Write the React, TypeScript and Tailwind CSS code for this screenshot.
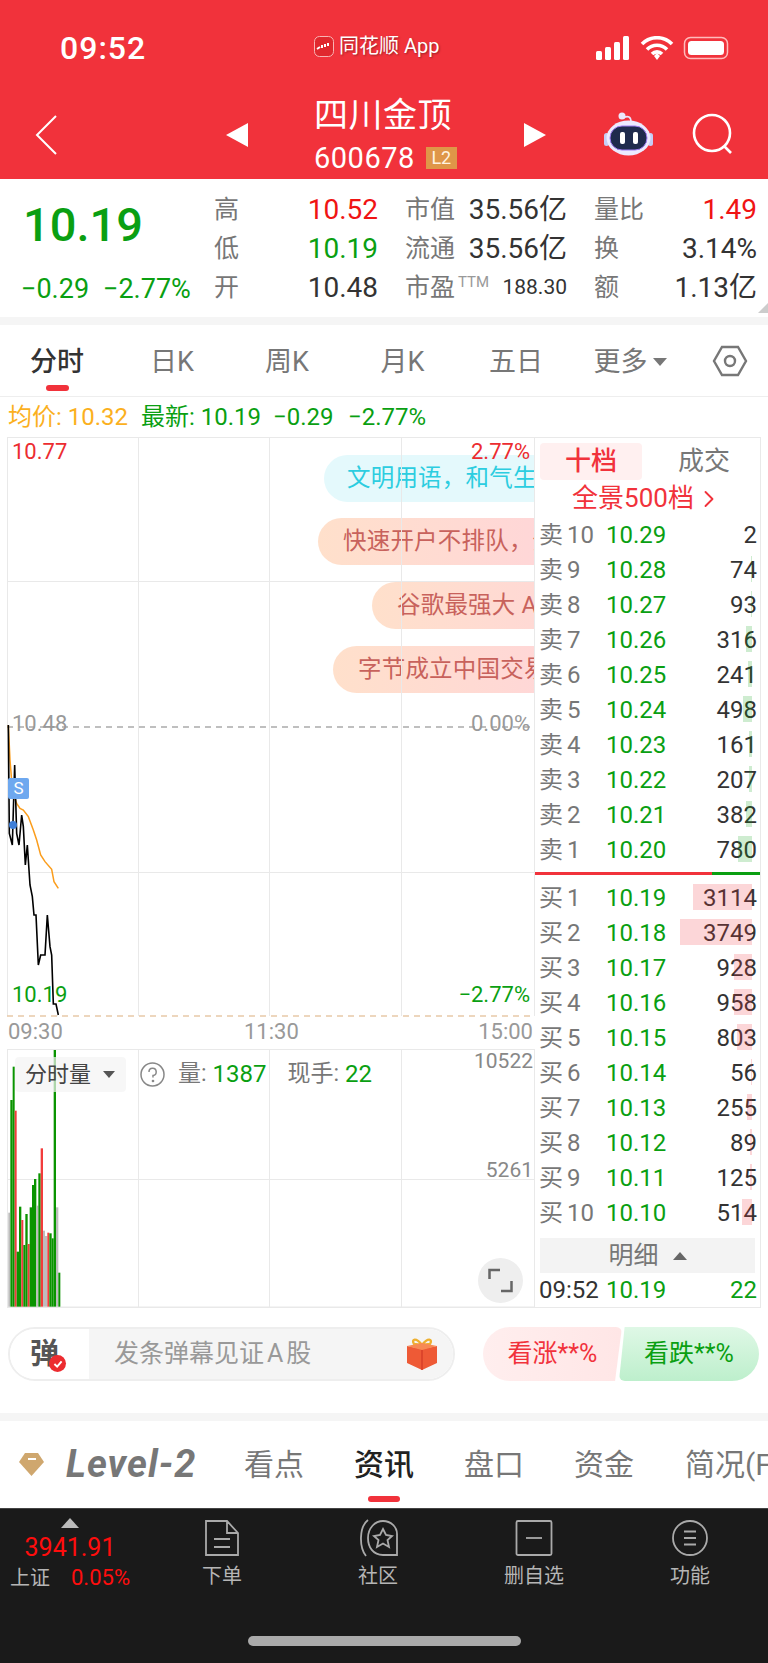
import React from "react";
import { ChevronRight } from "lucide-react";

const GREEN = "text-[#0a9f12]";

const blackLine = [[25,75],[28,400],[37,435],[44,195],[50,400],[57,435],[65,345],[70,380],[76,495],[82,435],[90,555],[97,590],[102,645],[108,645],[115,795],[122,765],[135,765],[142,645],[150,740],[155,765],[160,912],[168,912],[175,945]];
const avgLine = [[25,75],[30,180],[38,280],[50,310],[60,325],[70,330],[85,350],[100,390],[110,420],[122,465],[135,485],[155,508],[162,545],[175,565]];
const toPts = (l: number[][]) => l.map(([x, y]) => `${x / 3},${y / 3 + 700}`).join(" ");

// x0, x1, top in 3x crop coords, c = colour
const volBars: [number, number, number, string][] = [
  [25,30,548,"#bdbdbd"],[31,38,210,"#0a9400"],[38,44,110,"#0a9400"],[44,50,242,"#f23c3c"],[50,57,665,"#0a9400"],[57,64,530,"#0a9400"],
  [64,70,570,"#f23c3c"],[70,76,645,"#0a9400"],[76,83,552,"#0a9400"],[83,89,642,"#f23c3c"],[89,96,532,"#0a9400"],[96,102,465,"#0a9400"],
  [102,109,447,"#0a9400"],[109,115,527,"#bdbdbd"],[115,122,430,"#0a9400"],[122,129,355,"#f23c3c"],[129,135,602,"#bdbdbd"],[135,142,618,"#bdbdbd"],
  [142,148,608,"#f23c3c"],[148,155,610,"#0a9400"],[155,161,625,"#0a9400"],[161,168,60,"#0a9400"],[168,175,532,"#bdbdbd"],[175,181,728,"#0a9400"],
];

const sells = [
  ["卖", "10", "10.29", "2", 0], ["卖", "9", "10.28", "74", 1], ["卖", "8", "10.27", "93", 1], ["卖", "7", "10.26", "316", 6], ["卖", "6", "10.25", "241", 4],
  ["卖", "5", "10.24", "498", 9], ["卖", "4", "10.23", "161", 3], ["卖", "3", "10.22", "207", 3], ["卖", "2", "10.21", "382", 6], ["卖", "1", "10.20", "780", 14],
] as const;
const buys = [
  ["买", "1", "10.19", "3114", 59], ["买", "2", "10.18", "3749", 72], ["买", "3", "10.17", "928", 18], ["买", "4", "10.16", "958", 18], ["买", "5", "10.15", "803", 15],
  ["买", "6", "10.14", "56", 1], ["买", "7", "10.13", "255", 5], ["买", "8", "10.12", "89", 2], ["买", "9", "10.11", "125", 2], ["买", "10", "10.10", "514", 10],
] as const;

function BookRow({ row, bar }: { row: readonly [string, string, string, string, number]; bar: string }) {
  return (
    <div className="relative flex items-center h-[35px] pl-[4px] pr-[3px] text-[24px]">
      <span className="w-[67px] text-[#777] whitespace-nowrap">{row[0]}<span className="ml-[4px]">{row[1]}</span></span>
      <span className={`${GREEN} w-[70px]`}>{row[2]}</span>
      <span className="relative flex-1 text-right text-[#333]">{row[3]}</span>
      <span className={`absolute right-[8px] top-[4px] h-[26px] ${bar}`} style={{ width: row[4] }} />
    </div>
  );
}

function Stat({ label, value, color = "text-[#333]" }: { label: string; value: string; color?: string }) {
  return (
    <div className="flex items-center justify-between h-[39px]">
      <span className="text-[25px] text-[#777]">{label}</span>
      <span className={`text-[28px] ${color}`}>{value}</span>
    </div>
  );
}

function Pill({ text, top, left, tone }: { text: string; top: string; left: string; tone: string }) {
  return (
    <div className={`absolute ${top} ${left} h-[47px] w-[300px] rounded-full flex items-center text-[23.5px] tracking-[0.2px] whitespace-nowrap ${tone}`}>
      {text}
    </div>
  );
}

function TabLabel({ children, active }: { children: React.ReactNode; active?: boolean }) {
  return (
    <div className={`relative w-[110px] shrink-0 text-center text-[30px] ${active ? "text-[#222] font-medium" : "text-[#777]"}`}>
      {children}
      {active && <span className="absolute left-[39px] top-[54px] w-[32px] h-[6px] rounded-full bg-[#f1323b]" />}
    </div>
  );
}

function NavItem({ label, children }: { label: string; children: React.ReactNode }) {
  return (
    <div className="w-[156px] shrink-0 flex flex-col items-center pt-[10px]">
      {children}
      <span className="mt-[4px]">{label}</span>
    </div>
  );
}

export default function App() {
  return (
    <div className="w-[768px] h-[1663px] overflow-hidden bg-white font-['Roboto','Noto_Sans_CJK_SC',sans-serif]">
      {/* Red header */}
      <div className="relative h-[179px] bg-[#f1323b] text-white">
        <div className="flex items-center h-[96px] pl-[60px] pr-[36px]">
          <span className="w-[254px] text-[32px] font-medium tracking-[1px]">09:52</span>
          <div className="flex items-center gap-[5px] -mt-[4px] w-[282px] [text-shadow:1px_1px_2px_rgba(0,0,0,0.35)]">
            <svg width="20" height="21" viewBox="0 0 20 21">
              <rect x="0.5" y="0.5" width="19" height="20" rx="5" fill="#e0282e" stroke="#f8b4b4" />
              <path d="M3 13 L6 11 M8 9 L8 12 M11 8 L11 11 M14 7 L14 10" stroke="#fff" strokeWidth="2" />
            </svg>
            <span className="text-[20px]">同花顺 App</span>
          </div>
          <svg width="134" height="24" viewBox="0 0 134 24" className="shrink-0">
            <rect x="0" y="15" width="6" height="9" rx="1.5" fill="#fff" />
            <rect x="9" y="11" width="6" height="13" rx="1.5" fill="#fff" />
            <rect x="18" y="6" width="6" height="18" rx="1.5" fill="#fff" />
            <rect x="27" y="0" width="6" height="24" rx="1.5" fill="#fff" />
            <path d="M46 8 A 21 21 0 0 1 76 8 M51 13.5 A 14 14 0 0 1 71 13.5 M56 18 A 7 7 0 0 1 66 18" fill="none" stroke="#fff" strokeWidth="3.6" />
            <path d="M58 20 L61 17 L64 20 L61 24 Z" fill="#fff" />
            <rect x="88.5" y="1.5" width="43" height="21" rx="6" fill="none" stroke="#fbb" strokeWidth="1.5" />
            <rect x="92" y="5" width="36" height="14" rx="3.5" fill="#fff" />
          </svg>
        </div>
        <svg className="absolute left-[34px] top-[114px]" width="24" height="42" viewBox="0 0 24 42" fill="none" stroke="#fff" strokeWidth="2">
          <path d="M22 2 L3 21 L22 40" />
        </svg>
        <svg className="absolute left-[225px] top-[122px]" width="24" height="26" viewBox="0 0 24 26"><path d="M1 13 L23 1 V25 Z" fill="#fff" /></svg>
        <div className="absolute left-[314px] top-[93px] text-[34px] leading-[45px] tracking-[0.5px]">四川金顶</div>
        <div className="absolute left-[314px] top-[140px] flex items-center">
          <span className="text-[29px] leading-[36px] tracking-[0.5px]">600678</span>
          <span className="ml-[11px] w-[31px] h-[22px] bg-[#df9648] text-[#fff3e0] text-[18px] leading-[22px] text-center">L2</span>
        </div>
        <svg className="absolute left-[523px] top-[122px]" width="24" height="26" viewBox="0 0 24 26"><path d="M23 13 L1 1 V25 Z" fill="#fff" /></svg>
        <svg className="absolute left-[604px] top-[112px]" width="50" height="44" viewBox="0 0 50 44">
          <path d="M19 6 Q27 2 27 10" stroke="#e9e4fb" strokeWidth="1.6" fill="none" />
          <circle cx="18" cy="4" r="3.5" fill="#ece8fb" />
          <rect x="0" y="21" width="5" height="13" rx="2.5" fill="#c6cdf6" />
          <rect x="44" y="21" width="5" height="13" rx="2.5" fill="#c6cdf6" />
          <ellipse cx="24.5" cy="26" rx="22" ry="17.5" fill="#eceaff" />
          <rect x="6" y="14" width="37" height="24" rx="12" fill="#1f2b4d" stroke="#9d7cf0" strokeWidth="1" />
          <rect x="16" y="20" width="5" height="12" rx="2" fill="#fff" />
          <rect x="29" y="20" width="5" height="12" rx="2" fill="#fff" />
        </svg>
        <svg className="absolute left-[692px] top-[113px]" width="42" height="42" viewBox="0 0 42 42" fill="none" stroke="#fff" strokeWidth="2.6">
          <circle cx="20" cy="20" r="18" />
          <path d="M32 33 L39 40" />
        </svg>
      </div>

      {/* Quote */}
      <div className="relative flex h-[138px] pt-[11px]">
        <div className={`w-[214px] shrink-0 pl-[23px] ${GREEN}`}>
          <div className="text-[47px] leading-[68px] mt-[1px] font-medium">10.19</div>
          <div className="flex mt-[13px] -ml-[2px] text-[27px] leading-[34px] whitespace-nowrap">
            <span className="w-[82px]">−0.29</span>
            <span>−2.77%</span>
          </div>
        </div>
        <div className="w-[164px] shrink-0">
          <Stat label="高" value="10.52" color="text-[#f01414]" />
          <Stat label="低" value="10.19" color={GREEN} />
          <Stat label="开" value="10.48" />
        </div>
        <div className="w-[162px] shrink-0 ml-[27px]">
          <Stat label="市值" value="35.56亿" />
          <Stat label="流通" value="35.56亿" />
          <div className="flex items-center h-[39px] whitespace-nowrap">
            <span className="text-[25px] text-[#777]">市盈</span>
            <span className="text-[15px] text-[#999] -mt-[10px] ml-[3px]">TTM</span>
            <span className="ml-auto text-[21px] text-[#333]">188.30</span>
          </div>
        </div>
        <div className="w-[163px] shrink-0 ml-[27px]">
          <Stat label="量比" value="1.49" color="text-[#f01414]" />
          <Stat label="换" value="3.14%" />
          <Stat label="额" value="1.13亿" />
        </div>
        <span className="absolute right-[0px] bottom-[4px] w-0 h-0 border-l-[10px] border-l-transparent border-b-[10px] border-b-[#ccc]" />
      </div>
      <div className="h-[8px] bg-[#f5f5f5]" />

      {/* Period tabs */}
      <div className="relative flex items-center h-[72px] pt-[3px] border-b border-[#eeeeee] text-[27px] text-[#777]">
        <div className="relative w-[114px] text-center font-medium text-[#333]">
          分时
          <span className="absolute left-[46px] top-[43px] w-[23px] h-[6px] rounded-full bg-[#f1323b]" />
        </div>
        <div className="w-[116px] text-center">日K</div>
        <div className="w-[114px] text-center">周K</div>
        <div className="w-[117px] text-center">月K</div>
        <div className="w-[110px] text-center">五日</div>
        <div className="w-[118px] flex items-center justify-center gap-[5px]">
          更多
          <span className="w-0 h-0 border-x-[7px] border-x-transparent border-t-[8px] border-t-[#777]" />
        </div>
        <svg width="36" height="32" viewBox="0 0 36 32" fill="none" stroke="#777" strokeWidth="2.4" className="ml-[23px] -mt-[3px]">
          <path d="M10 2 H26 L34 16 L26 30 H10 L2 16 Z" />
          <circle cx="18" cy="16" r="5" />
        </svg>
      </div>

      {/* 均价 line */}
      <div className="flex items-center h-[40px] pl-[8px] text-[24px] whitespace-nowrap">
        <span className="text-[#fbb01e] w-[133px]">均价: 10.32</span>
        <span className={`${GREEN} w-[132px]`}>最新: 10.19</span>
        <span className={`${GREEN} w-[75px]`}>−0.29</span>
        <span className={GREEN}>−2.77%</span>
      </div>

      {/* Chart and order book */}
      <div className="flex h-[871px]">
        <div className="relative w-[535px] shrink-0 overflow-hidden">
          <Pill text="文明用语，和气生财" top="top-[18px]" left="left-[324px]" tone="pl-[23px] bg-[#e4f9fc] text-[#2ccde0]" />
          <Pill text="快速开户不排队，全程线上" top="top-[81px]" left="left-[318px]" tone="pl-[25px] bg-gradient-to-r from-[#ffe0cb] to-[#ffd3dc] text-[#c8625c]" />
          <Pill text="谷歌最强大 A" top="top-[145px]" left="left-[372px]" tone="pl-[25px] bg-gradient-to-r from-[#ffe0cb] to-[#ffd3dc] text-[#c8625c]" />
          <Pill text="字节成立中国交易" top="top-[209px]" left="left-[333px]" tone="pl-[25px] bg-gradient-to-r from-[#ffe0cb] to-[#ffd3dc] text-[#c8625c]" />

          {/* price chart, svg coords are page coords */}
          <svg className="absolute left-0 top-0" width="535" height="871" viewBox="0 437 535 871" fill="none">
            <g stroke="#e9e9e9" strokeWidth="1">
              <path d="M7.5 437 V1016 M138.5 437 V1016 M269.5 437 V1016 M401.5 437 V1016 M534.5 437 V1016" />
              <path d="M7 437.5 H535 M7 581.5 H535 M7 872.5 H535" />
              <path d="M7.5 1049 V1308 M138.5 1049 V1308 M269.5 1049 V1308 M401.5 1049 V1308 M534.5 1049 V1308" />
              <path d="M7 1049.5 H535 M7 1179.5 H535" />
            </g>
            <path d="M7 1307.5 H535" stroke="#e9e9e9" strokeWidth="2" />
            <path d="M7 727 H534" stroke="#aaa" strokeWidth="1.5" strokeDasharray="6 5" />
            <path d="M7 1016 H534" stroke="#e8c9a8" strokeWidth="1.5" strokeDasharray="6 5" />
            <polyline points={toPts(avgLine)} stroke="#fb9d1c" strokeWidth="1.5" />
            <polyline points={toPts(blackLine)} stroke="#000" strokeWidth="1.6" />
            <circle cx="13" cy="825" r="4" fill="#3f7fd8" />
            {volBars.map(([a, b, t, c], i) => (
              <rect key={i} x={a / 3} y={1030 + t / 3} width={(b - a) / 3} height={(830 - t) / 3} fill={c} />
            ))}
          </svg>

          <span className="absolute left-[8px] top-[341px] w-[21px] h-[21px] rounded-[2px] bg-[#6ea8ef] text-white text-[17px] leading-[21px] text-center">S</span>

          <span className="absolute left-[12px] top-[1px] text-[22px] leading-[28px] text-[#ec2c30]">10.77</span>
          <span className="absolute right-[5px] top-[1px] text-[22px] leading-[28px] text-[#ec2c30]">2.77%</span>
          <span className="absolute left-[12px] top-[273px] text-[22px] leading-[28px] text-[#999]">10.48</span>
          <span className="absolute right-[5px] top-[273px] text-[22px] leading-[28px] text-[#999]">0.00%</span>
          <span className={`absolute left-[12px] top-[544px] text-[22px] leading-[28px] ${GREEN}`}>10.19</span>
          <span className={`absolute right-[5px] top-[544px] text-[22px] leading-[28px] ${GREEN}`}>−2.77%</span>

          <span className="absolute left-[8px] top-[581px] text-[22px] leading-[28px] text-[#999]">09:30</span>
          <span className="absolute left-[244px] top-[581px] text-[22px] leading-[28px] text-[#999]">11:30</span>
          <span className="absolute right-[2px] top-[581px] text-[22px] leading-[28px] text-[#999]">15:00</span>

          {/* volume header */}
          <div className="absolute left-[15px] top-[619px] flex items-center whitespace-nowrap text-[23px]">
            <div className="flex items-center w-[111px] h-[35px] pl-[10px] rounded-[4px] bg-[#f3f3f3]/70 text-[#444] text-[22px]">
              分时量
              <span className="ml-[12px] w-0 h-0 border-x-[6px] border-x-transparent border-t-[7px] border-t-[#555]" />
            </div>
            <svg className="ml-[14px]" width="25" height="25" viewBox="0 0 25 25" fill="none" stroke="#888" strokeWidth="1.5">
              <circle cx="12.5" cy="12.5" r="11.5" />
              <path d="M9 10 A3.6 3.6 0 1 1 13 13.5 V15.5" />
              <circle cx="13" cy="19" r="0.6" />
            </svg>
            <span className="ml-[13px] text-[#777]">量: </span>
            <span className={`ml-[6px] ${GREEN} text-[24px]`}>1387</span>
            <span className="ml-[21px] text-[#777]">现手: </span>
            <span className={`ml-[6px] ${GREEN} text-[24px]`}>22</span>
          </div>
          <span className="absolute right-[2px] top-[610px] text-[21px] leading-[28px] text-[#888]">10522</span>
          <span className="absolute right-[2px] top-[719px] text-[21px] leading-[28px] text-[#888]">5261</span>
          <div className="absolute left-[478px] top-[821px] w-[45px] h-[45px] rounded-full bg-[#eeeeee] flex items-center justify-center">
            <svg width="25" height="25" viewBox="0 0 25 25" fill="none" stroke="#666" strokeWidth="2.5">
              <path d="M1.5 11 V2 H12 M13 23 H23.5 V13" />
            </svg>
          </div>
        </div>

        {/* Order book */}
        <div className="w-[226px] h-[871px] border-r border-b border-t border-[#e9e9e9] shrink-0 flex flex-col">
          <div className="flex items-center shrink-0 h-[42px] pt-[5px] pl-[5px] text-[26px]">
            <div className="w-[102px] h-[37px] rounded-[4px] bg-[#fff0f0] text-[#f1323b] text-center leading-[37px] font-medium">十档</div>
            <div className="flex-1 text-center text-[#777] pl-[6px]">成交</div>
          </div>
          <div className="flex items-center justify-center shrink-0 h-[37px] text-[26px] text-[#f1323b]">
            全景500档<ChevronRight className="ml-[1px]" size={28} strokeWidth={1.6} />
          </div>
          <div className="shrink-0">
            {sells.map((r) => <BookRow key={r[1]} row={r} bar="bg-[#0a9f12]/20" />)}
          </div>
          <div className="flex shrink-0 h-[3px] mt-[5px] -ml-[1px]">
            <div className="w-[178px] bg-[#f1323b]" />
            <div className="flex-1 bg-[#0a9f12]" />
          </div>
          <div className="shrink-0 mt-[5px]">
            {buys.map((r) => <BookRow key={r[1]} row={r} bar="bg-[#f1323b]/20" />)}
          </div>
          <div className="flex items-center justify-center shrink-0 gap-[14px] mt-[8px] mx-[5px] h-[35px] bg-[#f3f3f3] text-[25px] text-[#777]">
            明细
            <span className="w-0 h-0 border-x-[7px] border-x-transparent border-b-[8px] border-b-[#666]" />
          </div>
          <div className="flex items-center shrink-0 h-[34px] pl-[4px] pr-[3px] text-[24px]">
            <span className="w-[67px] text-[#333]">09:52</span>
            <span className={`${GREEN} w-[70px]`}>10.19</span>
            <span className={`${GREEN} flex-1 text-right`}>22</span>
          </div>
        </div>
      </div>

      {/* Danmaku bar */}
      <div className="flex h-[105px] pt-[19px] pl-[8px]">
        <div className="flex w-[447px] h-[54px] rounded-full border-2 border-[#eeeeee] overflow-hidden">
          <div className="relative w-[79px] shrink-0 bg-white text-[#555] text-[29px] font-bold leading-[50px] pl-[20px]">
            弹
            <span className="absolute left-[39px] top-[26px] w-[17px] h-[17px] rounded-full bg-[#ec2c30] flex items-center justify-center">
              <svg width="12" height="12" viewBox="0 0 10 10" fill="none" stroke="#fff" strokeWidth="1.6"><path d="M2 5 L4.3 7.2 L8 2.8" /></svg>
            </span>
          </div>
          <div className="flex-1 flex items-center bg-[#f5f5f5] pl-[25px] text-[25px] text-[#999] whitespace-nowrap">
            发条弹幕见证<span className="mx-[3px]">A</span>股
            <svg className="ml-[auto] mr-[15px]" width="32" height="34" viewBox="0 0 32 34">
              <path d="M16 8 C10 0 5 2 8 7 Z M16 8 C22 0 27 2 24 7 Z" fill="none" stroke="#eeb02f" strokeWidth="2.4" />
              <path d="M1 9 L16 12 L31 9 V26 L16 33 L1 26 Z" fill="#ee5a36" />
              <path d="M1 9 L16 6 L31 9 L16 13 Z" fill="#f78a54" />
              <path d="M16 13 V33" stroke="#d73f28" strokeWidth="1.5" />
            </svg>
          </div>
        </div>
        <div className="flex ml-[28px] h-[54px] text-[25px]">
          <div className="w-[139px] h-full rounded-l-[27px] rounded-r-[6px] bg-gradient-to-r from-[#ffeeee] to-[#ffe6e6] text-[#f1323b] flex items-center justify-center [clip-path:polygon(0_0,100%_0,95%_100%,0_100%)]">
            看涨**%
          </div>
          <div className="w-[140px] h-full -ml-[3px] rounded-r-[27px] rounded-l-[6px] bg-gradient-to-b from-[#dff8e6] to-[#bdefcc] text-[#0a9f12] flex items-center justify-center [clip-path:polygon(4%_0,100%_0,100%_100%,0_100%)]">
            看跌**%
          </div>
        </div>
      </div>
      <div className="h-[8px] bg-[#f5f5f5]" />

      {/* Info tabs */}
      <div className="flex items-center h-[87px] overflow-hidden whitespace-nowrap">
        <svg className="ml-[18px] shrink-0" width="27" height="25" viewBox="0 0 27 25">
          <path d="M7 1 H20 L26 10 L13.5 24 L1 10 Z" fill="#cfa76e" />
          <rect x="10" y="6" width="8" height="2" fill="#fff" />
        </svg>
        <span className="ml-[21px] w-[153px] shrink-0 text-[38px] font-bold italic text-[#777] tracking-[1px]">Level-2</span>
        <TabLabel>看点</TabLabel>
        <TabLabel active>资讯</TabLabel>
        <TabLabel>盘口</TabLabel>
        <TabLabel>资金</TabLabel>
        <span className="ml-[26px] shrink-0 text-[30px] text-[#777]">简况(F10)</span>
      </div>

      {/* Bottom dark bar */}
      <div className="relative h-[155px] bg-[#1a1a1a] border-t border-[#444] text-[20px] text-[#b5b5b5]">
        <div className="absolute left-[10px] top-[9px] w-[120px] flex flex-col items-center">
          <span className="w-0 h-0 border-x-[9px] border-x-transparent border-b-[10px] border-b-[#bbb]" />
          <span className="text-[#ff0d0d] text-[25px] leading-[32px] mt-[4px]">3941.91</span>
          <div className="flex items-center self-start w-[128px] shrink-0 leading-[28px] whitespace-nowrap">
            <span>上证</span>
            <span className="text-[#ff0d0d] ml-[21px] text-[22px]">0.05%</span>
          </div>
        </div>
        <div className="flex pl-[144px]">
          <NavItem label="下单">
            <svg width="36" height="38" viewBox="0 0 36 38" fill="none" stroke="#aaa" strokeWidth="1.8">
              <path d="M2 2 H23 L34 14 V36 H2 Z M23 2 V14 H34 M10 20 H26 M10 28 H26" />
            </svg>
          </NavItem>
          <NavItem label="社区">
            <svg width="42" height="38" viewBox="0 0 42 38" fill="none" stroke="#aaa" strokeWidth="1.8">
              <path d="M11 1 C2 8 2 28 9 37" />
              <path d="M26 2 C34 2 40 8 40 15 V36 H26 C16 36 11 28 11 19 C11 9 18 2 26 2 Z" />
              <path d="M26 10 L29 16 L35 17 L30.5 21 L32 28 L26 24.5 L20 28 L21.5 21 L17 17 L23 16 Z" />
            </svg>
          </NavItem>
          <NavItem label="删自选">
            <svg width="38" height="38" viewBox="0 0 38 38" fill="none" stroke="#aaa" strokeWidth="1.8">
              <rect x="1.5" y="2" width="35" height="34" rx="1.5" />
              <path d="M11 19 H27" />
            </svg>
          </NavItem>
          <NavItem label="功能">
            <svg width="38" height="38" viewBox="0 0 38 38" fill="none" stroke="#aaa" strokeWidth="1.8">
              <circle cx="19" cy="19" r="17" />
              <path d="M13 12.5 H25 M13 19 H25 M13 25.5 H25" />
            </svg>
          </NavItem>
        </div>
        <span className="absolute left-[248px] top-[127px] w-[273px] h-[10px] rounded-full bg-[#aaaaaa]" />
      </div>
    </div>
  );
}
